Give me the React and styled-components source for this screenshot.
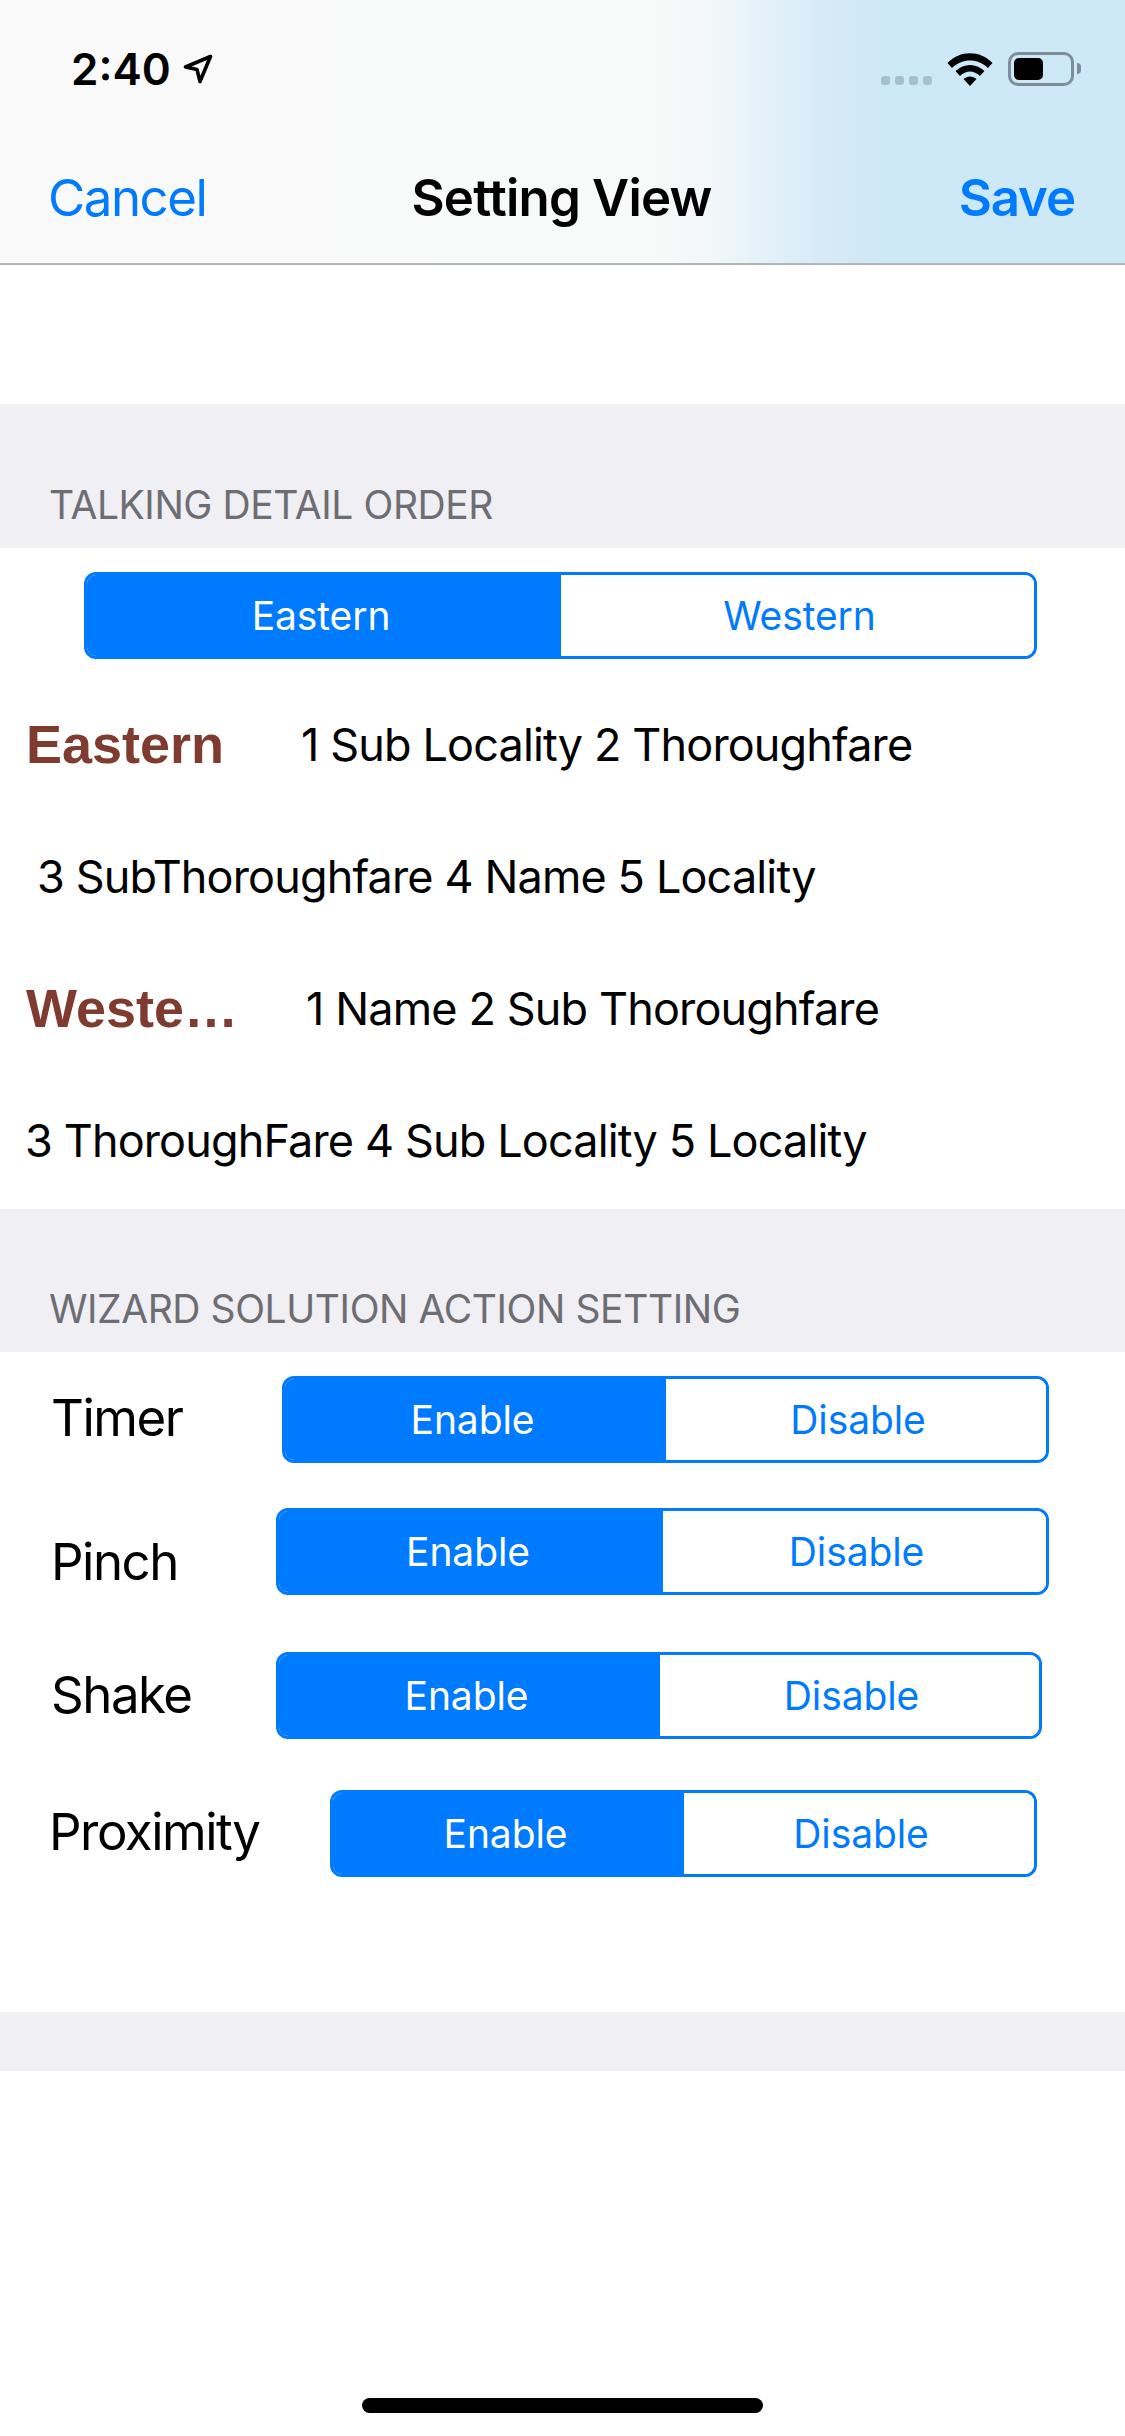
import React from "react";
import styled, { createGlobalStyle } from "styled-components";

const GlobalStyle = createGlobalStyle`
  html, body {
    margin: 0;
    padding: 0;
    background: #ffffff;
  }
  body {
    font-family: Inter, "Liberation Sans", sans-serif;
    -webkit-font-smoothing: antialiased;
  }
`;

const wizardRows = [
  { name: "Timer", pad: 51, label: 231, seg: 767, mid: 381, top: 24, nudge: -5 },
  { name: "Pinch", pad: 51, label: 225, seg: 773, mid: 384, top: 45, nudge: 19 },
  { name: "Shake", pad: 51, label: 225, seg: 766, mid: 381, top: 57, nudge: -3 },
  { name: "Proximity", pad: 49, label: 281, seg: 707, mid: 351, top: 51, nudge: -5 },
];

function Segment({ first, second, width, mid, top, left }) {
  return (
    <SegmentBox $width={width} $mid={mid} $top={top} $left={left}>
      <SegmentOn>{first}</SegmentOn>
      <SegmentOff>{second}</SegmentOff>
    </SegmentBox>
  );
}

function StatusIcons() {
  return (
    <StatusRight>
      <Dots>
        <i />
        <i />
        <i />
        <i />
      </Dots>
      <svg width="46" height="34" viewBox="0 0 46 34">
        <path d="M0.5 11 C13 -2 33 -2 45.5 11 L41 16 C31 6 15 6 5 16 Z" fill="#000" />
        <path d="M8.5 19 C17 11 29 11 37.5 19 L33 24 C27 18 19 18 13 24 Z" fill="#000" />
        <path d="M16.5 27 C20.5 23.5 25.5 23.5 29.5 27 L23 34 Z" fill="#000" />
      </svg>
      <Battery>
        <BatteryLevel />
        <BatteryCap />
      </Battery>
    </StatusRight>
  );
}

export default function App() {
  return (
    <Screen>
      <GlobalStyle />
      <Header>
        <StatusBar>
          <Time>
            2:40
            <svg width="30" height="30" viewBox="0 0 30 30">
              <path
                d="M2.5 13 L27.5 2.5 L17 27.5 L14 15.5 Z"
                fill="none"
                stroke="#000"
                strokeWidth="3.6"
                strokeLinejoin="round"
              />
            </svg>
          </Time>
          <StatusIcons />
        </StatusBar>
        <NavBar>
          <NavAction>Cancel</NavAction>
          <NavTitle>Setting View</NavTitle>
          <NavAction $bold $right>
            Save
          </NavAction>
        </NavBar>
      </Header>

      <TopGap />

      <SectionHeader $height={144}>TALKING DETAIL ORDER</SectionHeader>
      <OrderSection>
        <Segment first="Eastern" second="Western" width={953} mid={474} top={24} left={84} />
        <OrderList>
          <OrderRow $pad={26}>
            <OrderName $width={275}>Eastern</OrderName>
            <OrderText>1 Sub Locality 2 Thoroughfare</OrderText>
          </OrderRow>
          <OrderRow $pad={37}>
            <OrderText>3 SubThoroughfare 4 Name 5 Locality</OrderText>
          </OrderRow>
          <OrderRow $pad={26}>
            <OrderName $width={280}>Weste…</OrderName>
            <OrderText>1 Name 2 Sub Thoroughfare</OrderText>
          </OrderRow>
          <OrderRow $pad={25}>
            <OrderText>3 ThoroughFare 4 Sub Locality 5 Locality</OrderText>
          </OrderRow>
        </OrderList>
      </OrderSection>

      <SectionHeader $height={143}>WIZARD SOLUTION ACTION SETTING</SectionHeader>
      <WizardSection>
        {wizardRows.map((row) => (
          <WizardRow key={row.name} $pad={row.pad} $label={row.label} $top={row.top}>
            <WizardLabel $nudge={row.nudge}>{row.name}</WizardLabel>
            <Segment first="Enable" second="Disable" width={row.seg} mid={row.mid} />
          </WizardRow>
        ))}
      </WizardSection>

      <FooterBand />
      <BottomArea>
        <HomeIndicator />
      </BottomArea>
    </Screen>
  );
}

const Screen = styled.div`
  width: 1125px;
  height: 2436px;
  display: flex;
  flex-direction: column;
  overflow: hidden;
  background: #ffffff;
`;

const Header = styled.header`
  height: 265px;
  box-sizing: border-box;
  border-bottom: 2px solid #b4b7b9;
  display: flex;
  flex-direction: column;
  background: linear-gradient(
    to right,
    #f9f9f9 0%,
    #f8f9f9 58%,
    #f2f7f9 63%,
    #e4f1f8 68%,
    #d6ebf7 73%,
    #cde8f6 79%,
    #cde8f6 100%
  );
`;

const StatusBar = styled.div`
  height: 132px;
  box-sizing: border-box;
  padding: 48px 51px 0 71px;
  display: flex;
  justify-content: space-between;
  align-items: flex-start;
`;

const Time = styled.div`
  display: flex;
  align-items: center;
  gap: 12px;
  font-size: 44px;
  line-height: 42px;
  font-weight: 600;
  color: #000000;
`;

const StatusRight = styled.div`
  display: flex;
  align-items: flex-end;
  gap: 15px;
  padding-top: 4px;
`;

const Dots = styled.div`
  display: flex;
  gap: 5px;
  margin-bottom: 1px;

  i {
    display: block;
    width: 9px;
    height: 9px;
    border-radius: 3px;
    background: #a9c0cc;
  }
`;

const Battery = styled.div`
  position: relative;
  width: 66px;
  height: 34px;
  box-sizing: border-box;
  border: 3px solid #7e8e98;
  border-radius: 10px;
  padding: 3px;
`;

const BatteryLevel = styled.div`
  width: 29px;
  height: 22px;
  border-radius: 5px;
  background: #000000;
`;

const BatteryCap = styled.div`
  position: absolute;
  top: 8px;
  right: -10px;
  width: 4px;
  height: 11px;
  border-radius: 0 4px 4px 0;
  background: #7e8e98;
`;

const NavBar = styled.nav`
  padding: 2px 50px 0 48px;
  display: grid;
  grid-template-columns: 1fr auto 1fr;
  align-items: center;
  height: 132px;
  box-sizing: border-box;
`;

const NavAction = styled.div`
  font-size: 51px;
  line-height: 60px;
  font-weight: ${(p) => (p.$bold ? 600 : 400)};
  letter-spacing: ${(p) => (p.$bold ? -1.1 : -1.5)}px;
  color: #007aff;
  text-align: ${(p) => (p.$right ? "right" : "left")};
`;

const NavTitle = styled.div`
  font-size: 51px;
  line-height: 60px;
  font-weight: 600;
  letter-spacing: -0.8px;
  color: #000000;
`;

const TopGap = styled.div`
  height: 139px;
`;

const SectionHeader = styled.div`
  height: ${(p) => p.$height}px;
  box-sizing: border-box;
  padding: 0 0 19px 49px;
  display: flex;
  align-items: flex-end;
  background: #efeff4;
  color: #6d6d72;
  font-size: 39px;
  line-height: 48px;
  letter-spacing: -0.42px;
`;

const OrderSection = styled.section`
  height: 661px;
  padding-top: 24px;
  box-sizing: border-box;
`;

const OrderList = styled.div`
  padding-top: 19px;
`;

const OrderRow = styled.div`
  height: 132px;
  padding-left: ${(p) => p.$pad}px;
  display: flex;
  align-items: center;
`;

const OrderName = styled.div`
  width: ${(p) => p.$width}px;
  font-family: "Liberation Sans", Arial, sans-serif;
  font-size: 54px;
  font-weight: 700;
  color: #7f3b2f;
`;

const OrderText = styled.div`
  font-size: 45px;
  letter-spacing: -0.86px;
  color: #000000;
`;

const SegmentBox = styled.div`
  width: ${(p) => p.$width}px;
  height: 87px;
  box-sizing: border-box;
  flex: none;
  margin-left: ${(p) => p.$left || 0}px;
  display: grid;
  grid-template-columns: ${(p) => p.$mid}px 1fr;
  border: 3px solid #007aff;
  border-radius: 12px;
  overflow: hidden;
  font-size: 39px;
  letter-spacing: -0.1px;
`;

const SegmentOn = styled.div`
  display: flex;
  align-items: center;
  justify-content: center;
  padding-right: 6px;
  background: #007aff;
  color: #ffffff;
`;

const SegmentOff = styled.div`
  display: flex;
  align-items: center;
  justify-content: center;
  padding-left: 4px;
  background: #ffffff;
  color: #007aff;
`;

const WizardSection = styled.section`
  height: 660px;
`;

const WizardRow = styled.div`
  display: grid;
  grid-template-columns: ${(p) => p.$label}px auto;
  align-items: center;
  padding-left: ${(p) => p.$pad}px;
  padding-top: ${(p) => p.$top}px;
`;

const WizardLabel = styled.div`
  font-size: 51px;
  letter-spacing: -1.5px;
  color: #000000;
  margin-top: ${(p) => Math.max(p.$nudge, 0)}px;
  margin-bottom: ${(p) => Math.max(-p.$nudge, 0)}px;
`;

const FooterBand = styled.div`
  height: 59px;
  background: #efeff4;
`;

const BottomArea = styled.div`
  flex: 1;
  display: flex;
  flex-direction: column;
  justify-content: flex-end;
  align-items: center;
  padding-bottom: 23px;
`;

const HomeIndicator = styled.div`
  width: 401px;
  height: 15px;
  border-radius: 8px;
  background: #000000;
`;
